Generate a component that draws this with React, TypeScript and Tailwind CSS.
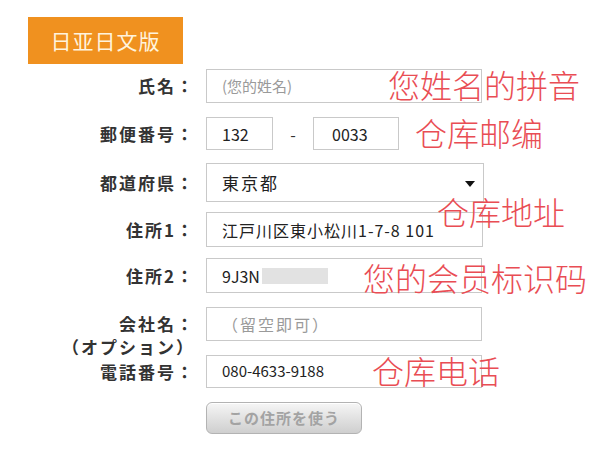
import React from 'react';

const cjk = "font-['Noto_Sans_CJK_JP','Noto_Sans_CJK_SC',sans-serif]";
const note = "absolute text-[32px] leading-[32px] text-[#e94d54] font-['Noto_Sans_CJK_SC',sans-serif] font-light whitespace-nowrap";
const box = 'flex items-center bg-white border border-[#c9c9c9] pl-[15px]';

function Label({ children }: { children: React.ReactNode }) {
  return (
    <div className="w-[195px] shrink-0 text-right text-[17px] font-bold tracking-[2px] text-[#333]">
      {children}
    </div>
  );
}

export default function App() {
  return (
    <div className={`relative w-[606px] h-[455px] bg-white pt-[17px] ${cjk}`}>
      <div className="ml-[28px] flex h-[47px] w-[155px] items-center justify-center bg-[#f0911f] text-[21px] tracking-[1px] text-[#fff3dc]">
        日亚日文版
      </div>

      <div className="mt-[5px] flex h-[34px] items-center gap-[11px]">
        <Label>氏名：</Label>
        <div className={`${box} h-full w-[276px] text-[15px] text-[#9a9a9a]`}>(您的姓名)</div>
      </div>

      <div className="mt-[14px] flex h-[33px] items-center gap-[11px]">
        <Label>郵便番号：</Label>
        <div className="flex h-full items-center">
          <div className={`${box} h-full w-[67px] text-[16px] text-[#222]`}>132</div>
          <span className="w-[40px] text-center text-[16px] text-[#333]">-</span>
          <div className={`${box} h-full w-[86px] pl-[18px] text-[16px] text-[#222]`}>0033</div>
        </div>
      </div>

      <div className="mt-[13px] flex h-[39px] items-center gap-[11px]">
        <Label>都道府県：</Label>
        <div className={`${box} h-full w-[278px] justify-between border-[#bdbdbd] pr-[8px] text-[17px] tracking-[2px] text-[#222]`}>
          <span>東京都</span>
          <svg width="10" height="6" viewBox="0 0 10 6" className="mt-[2px]">
            <path d="M0 0h10L5 6z" fill="#111" />
          </svg>
        </div>
      </div>

      <div className="mt-[10px] flex h-[35px] items-center gap-[11px]">
        <Label>住所1：</Label>
        <div className={`${box} h-full w-[277px] text-[16px] tracking-[1px] text-[#222]`}>江戸川区東小松川1-7-8 101</div>
      </div>

      <div className="mt-[11px] flex h-[35px] items-center gap-[11px]">
        <Label>住所2：</Label>
        <div className={`${box} h-full w-[276px] text-[16px] text-[#222]`}>
          9J3N
          <span className="ml-[2px] inline-block h-[16px] w-[66px] bg-[#e2e2e2]" />
        </div>
      </div>

      <div className="mt-[14px] flex h-[34px] items-start gap-[11px]">
        <div className="h-full w-[195px] shrink-0 pt-[5px] text-right text-[17px] font-bold leading-[23px] tracking-[2px] text-[#333]">
          <div>会社名：</div>
          <div>（オプション）</div>
        </div>
        <div className={`${box} h-full w-[276px] text-[16px] tracking-[2px] text-[#9a9a9a]`}>（留空即可）</div>
      </div>

      <div className="mt-[14px] flex h-[33px] items-center gap-[11px]">
        <Label>電話番号：</Label>
        <div className={`${box} h-full w-[276px] text-[15px] text-[#222]`}>080-4633-9188</div>
      </div>

      <div className="mt-[14px] ml-[206px] flex h-[32px] w-[156px] items-center justify-center rounded-[6px] border border-[#b3b3b3] bg-gradient-to-b from-[#f6f6f6] via-[#e2e2e2] to-[#cfcfcf] text-[15px] font-bold tracking-[1px] text-[#a3a3a3] shadow-[inset_0_1px_0_#fff]">
        この住所を使う
      </div>

      <div className={`${note} left-[388px] top-[68px]`}>您姓名的拼音</div>
      <div className={`${note} left-[415px] top-[116px]`}>仓库邮编</div>
      <div className={`${note} left-[437px] top-[195px]`}>仓库地址</div>
      <div className={`${note} left-[363px] top-[261px]`}>您的会员标识码</div>
      <div className={`${note} left-[372px] top-[354px]`}>仓库电话</div>
    </div>
  );
}
